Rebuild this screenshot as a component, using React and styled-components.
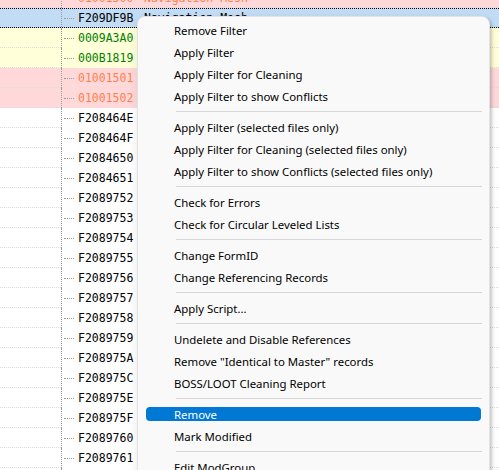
import React from "react";
import styled, { createGlobalStyle, css } from "styled-components";

const GlobalStyle = createGlobalStyle`
  html, body {
    margin: 0;
    padding: 0;
    width: 499px;
    height: 470px;
    overflow: hidden;
    background: #fff;
  }
`;

const Page = styled.div`
  position: relative;
  width: 499px;
  height: 470px;
  overflow: hidden;
`;

const RecordList = styled.div`
  margin-top: -12px;
  display: flex;
  flex-direction: column;
`;

const rowColors = {
  conflict: "#ffd9d9",
  override: "#ffffd9",
  selected: "#c1dcf4",
  plain: "#ffffff",
};

const textColors = {
  conflict: "#ff7f50",
  override: "#008000",
  selected: "#000000",
  plain: "#000000",
};

const Row = styled.div`
  display: flex;
  height: 20px;
  box-sizing: border-box;
  background: ${(p) => rowColors[p.$kind]};
  ${(p) =>
    p.$kind === "selected" &&
    css`
      border-top: 1px dotted #000;
      border-bottom: 1px dotted #000;
    `}
`;

const Indent = styled.div`
  width: 61px;
  flex: none;
  box-sizing: border-box;
  border-bottom: 1px dotted ${(p) => (p.$focus ? "transparent" : "#dcdcdc")};
`;

const TreeCell = styled.div`
  width: 78px;
  flex: none;
  display: flex;
  align-items: center;
  border-left: 1px dotted #9a9a9a;
`;

const Connector = styled.span`
  width: 10px;
  margin-left: 2px;
  margin-right: 4px;
  border-top: 1px dotted #9a9a9a;
`;

const FormId = styled.span`
  font-family: "DejaVu Sans Mono", monospace;
  font-size: 11.5px;
  color: ${(p) => textColors[p.$kind]};
  white-space: nowrap;
`;

const NameCell = styled.div`
  flex: 1;
  display: flex;
  align-items: center;
  padding-left: 4px;
  box-sizing: border-box;
  border-bottom: 1px dotted ${(p) => (p.$focus ? "transparent" : "#dcdcdc")};
  font-family: "DejaVu Sans Mono", monospace;
  font-size: 11.5px;
  color: ${(p) => textColors[p.$kind]};
  white-space: nowrap;
`;

const Menu = styled.div`
  position: absolute;
  left: 137px;
  top: 16px;
  width: 353px;
  box-sizing: border-box;
  display: flex;
  flex-direction: column;
  padding: 2px 0 40px;
  background: #f9f9f9;
  border: 1px solid #e3e3e3;
  border-radius: 8px;
  box-shadow: 2px 2px 3px rgba(0, 0, 0, 0.18), 0 4px 12px rgba(0, 0, 0, 0.08);
  font-family: "Noto Sans", "Open Sans", sans-serif;
  font-size: 11.4px;
`;

const Item = styled.div`
  height: 14px;
  margin: 4px 8px;
  padding-left: 28px;
  display: flex;
  align-items: center;
  border-radius: 4px;
  color: ${(p) => (p.$active ? "#fff" : "#000")};
  background: ${(p) => (p.$active ? "#0078d4" : "transparent")};
  white-space: nowrap;
`;

const Separator = styled.div`
  height: 1px;
  margin: 4px 7px 4px 38px;
  background: #d6d6d6;
`;

const rows = [
  { id: "01001500", name: "Navigation Mesh", kind: "conflict" },
  { id: "F209DF9B", name: "Navigation Mesh", kind: "selected" },
  { id: "0009A3A0", kind: "override" },
  { id: "000B1819", kind: "override" },
  { id: "01001501", kind: "conflict" },
  { id: "01001502", kind: "conflict" },
  ...[
    "F208464E",
    "F208464F",
    "F2084650",
    "F2084651",
    "F2089752",
    "F2089753",
    "F2089754",
    "F2089755",
    "F2089756",
    "F2089757",
    "F2089758",
    "F2089759",
    "F208975A",
    "F208975C",
    "F208975E",
    "F208975F",
    "F2089760",
    "F2089761",
    "F2089762",
  ].map((id) => ({ id, kind: "plain" })),
];

const menu = [
  "Remove Filter",
  "Apply Filter",
  "Apply Filter for Cleaning",
  "Apply Filter to show Conflicts",
  "-",
  "Apply Filter (selected files only)",
  "Apply Filter for Cleaning (selected files only)",
  "Apply Filter to show Conflicts (selected files only)",
  "-",
  "Check for Errors",
  "Check for Circular Leveled Lists",
  "-",
  "Change FormID",
  "Change Referencing Records",
  "-",
  "Apply Script...",
  "-",
  "Undelete and Disable References",
  'Remove "Identical to Master" records',
  "BOSS/LOOT Cleaning Report",
  "-",
  "Remove",
  "Mark Modified",
  "-",
  "Edit ModGroup...",
  "Add to ModGroup...",
];

export default function App() {
  return (
    <Page>
      <GlobalStyle />
      <RecordList>
        {rows.map((r) => {
          const focus = r.kind === "selected";
          return (
            <Row key={r.id} $kind={r.kind}>
              <Indent $focus={focus} />
              <TreeCell>
                <Connector />
                <FormId $kind={r.kind}>{r.id}</FormId>
              </TreeCell>
              <NameCell $focus={focus} $kind={r.kind}>
                {r.name}
              </NameCell>
            </Row>
          );
        })}
      </RecordList>
      <Menu>
        {menu.map((label, i) =>
          label === "-" ? (
            <Separator key={i} />
          ) : (
            <Item key={i} $active={label === "Remove"}>
              {label}
            </Item>
          )
        )}
      </Menu>
    </Page>
  );
}
